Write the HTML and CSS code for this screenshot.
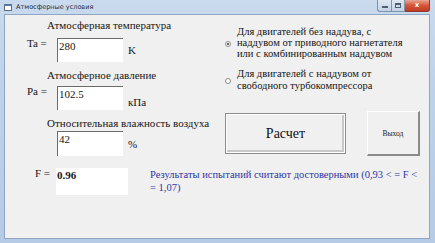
FILE: index.html
```html
<!DOCTYPE html>
<html lang="ru">

<head>
    <meta charset="UTF-8">
    <title>Атмосферные условия</title>
    <link rel="stylesheet" href="styles.css">
</head>

<body>
    <div class="window">
        <div class="titlebar">
            <svg class="app-icon" width="9" height="9" viewBox="0 0 9 9">
                <rect x="0.5" y="1.5" width="7" height="6" fill="#fff" stroke="#5a6b80" />
                <rect x="0.5" y="1.5" width="7" height="1.5" fill="#5a7ca8" />
            </svg>
            <span class="title">Атмосферные условия</span>
            <div class="controls">
                <div class="ctl ctl-min"><span></span></div>
                <div class="ctl ctl-max"><span></span></div>
                <div class="ctl ctl-close">x</div>
            </div>
        </div>

        <div class="client">
            <div class="fields">
                <div class="field field-t">
                    <div class="caption">Атмосферная температура</div>
                    <div class="row">
                        <span class="label">Ta =</span>
                        <div class="edit">280</div>
                        <span class="unit">K</span>
                    </div>
                </div>
                <div class="field field-p">
                    <div class="caption">Атмосферное давление</div>
                    <div class="row">
                        <span class="label">Pa =</span>
                        <div class="edit">102.5</div>
                        <span class="unit unit-low">кПа</span>
                    </div>
                </div>
                <div class="field field-h">
                    <div class="caption">Относительная влажность воздуха</div>
                    <div class="row">
                        <span class="label">&nbsp;</span>
                        <div class="edit">42</div>
                        <span class="unit">%</span>
                    </div>
                </div>
            </div>

            <div class="options">
                <div class="radio radio-first">
                    <span class="dot checked"></span>
                    <span class="radio-text">Для двигателей без наддува, с<br>наддувом от приводного нагнетателя<br>или с комбинированным наддувом</span>
                </div>
                <div class="radio radio-second">
                    <span class="dot"></span>
                    <span class="radio-text">Для двигателей с наддувом от<br>свободного турбокомпрессора</span>
                </div>
                <div class="buttons">
                    <div class="btn btn-calc">Расчет</div>
                    <div class="btn btn-exit">Выход</div>
                </div>
            </div>

            <div class="result">
                <span class="label label-f">F =</span>
                <div class="result-box">0.96</div>
                <div class="verdict">Результаты испытаний считают достоверными (0,93 &lt; = F &lt;<br>= 1,07)</div>
            </div>
        </div>
    </div>
</body>

</html>
```

FILE: styles.css
```css
* {
    margin: 0;
    padding: 0;
    box-sizing: border-box;
}

body {
    width: 435px;
    height: 243px;
    overflow: hidden;
    background: #fff;
}

.window {
    width: 435px;
    height: 243px;
    display: flex;
    flex-direction: column;
    background: linear-gradient(180deg, #c9daee 0%, #bcd1ea 40%, #b5cbe6 100%);
    padding: 0 5px 4px 4px;
}

.titlebar {
    height: 14px;
    display: flex;
    align-items: center;
    font-family: "DejaVu Sans", "Liberation Sans", sans-serif;
}

.app-icon {
    margin-right: 3px;
}

.title {
    font-size: 6.5px;
    color: #1e2a3a;
}

.controls {
    margin-left: auto;
    display: flex;
    align-self: flex-start;
    height: 12px;
}

.ctl {
    width: 14px;
    height: 12px;
    border: 1px solid #7f93ad;
    border-top: none;
    background: linear-gradient(180deg, #dfe8f3, #c3d2e4);
    display: flex;
    align-items: center;
    justify-content: center;
}

.ctl-min {
    border-radius: 0 0 0 3px;
    border-right: none;
}

.ctl-min span {
    width: 6px;
    height: 2px;
    background: #4e5d70;
    margin-top: 3px;
}

.ctl-max span {
    width: 6px;
    height: 5px;
    border: 1px solid #4e5d70;
    border-top-width: 2px;
}

.ctl-close {
    width: 25px;
    border-left: none;
    border-color: #8f3a2e;
    border-radius: 0 0 3px 0;
    background: linear-gradient(180deg, #e8a491 0%, #d5553b 50%, #c23b22 100%);
    color: #fff;
    font-size: 7px;
    font-weight: bold;
    line-height: 1;
}

.client {
    flex: 1;
    background: #f0f0f0;
    border: 1px solid #8fa6c2;
    display: grid;
    grid-template-columns: 219px 1fr;
    grid-template-rows: auto 1fr;
    font-family: "Liberation Serif", "Times New Roman", serif;
    font-size: 11px;
    color: #161616;
}

/* left column */

.fields {
    padding: 4px 0 0 22px;
}

.caption {
    line-height: 12px;
    padding-left: 20px;
}

.field-p,
.field-h {
    margin-top: 7px;
}

.row {
    display: flex;
    margin-top: 7px;
}

.field-p .row {
    margin-top: 5px;
}

.field-h .row {
    margin-top: 2px;
}

.label {
    width: 30px;
    line-height: 12px;
    margin-top: -1px;
}

.edit {
    width: 66px;
    height: 24px;
    background: #fff;
    border-left: 1px solid #6b6b6b;
    border-top: 1px solid #6b6b6b;
    padding: 1px 0 0 1px;
    line-height: 12px;
}

.field-h .edit {
    height: 25px;
}

.unit {
    align-self: center;
    margin-left: 5px;
    line-height: 12px;
}

.unit-low {
    margin-top: 8px;
}

/* right column */

.options {
    padding: 11px 0 0 1px;
}

.radio {
    display: flex;
    align-items: center;
}

.radio-text {
    line-height: 11px;
    font-size: 10.5px;
    margin-left: 6px;
}

.radio-second {
    margin-top: 9px;
}

.radio-second .radio-text {
    line-height: 12px;
}

.dot {
    width: 6px;
    height: 6px;
    border-radius: 50%;
    border: 1px solid #8a8a8a;
    background: #fff;
    position: relative;
    top: 1px;
}

.dot.checked::after {
    content: '';
    position: absolute;
    left: 1px;
    top: 1px;
    width: 2px;
    height: 2px;
    border-radius: 50%;
    background: #2b2b2b;
}

.buttons {
    display: flex;
    align-items: center;
    margin-top: 19px;
}

.btn {
    display: flex;
    align-items: center;
    justify-content: center;
}

.btn-calc {
    width: 121px;
    height: 41px;
    border: 1px solid #8c8c8c;
    box-shadow: inset 0 0 0 1px #fff, inset -1px -1px 0 2px #c8c8c8;
    font-size: 14px;
    color: #111;
}

.btn-exit {
    width: 53px;
    height: 45px;
    margin-left: 21px;
    border-right: 2px solid #8a8a8a;
    border-bottom: 2px solid #8a8a8a;
    border-top: 1px solid #fff;
    border-left: 1px solid #fff;
    font-size: 7.5px;
    color: #222;
}

/* result row */

.result {
    grid-column: 1 / 3;
    display: flex;
    align-items: flex-start;
    padding: 12px 0 0 30px;
}

.label-f {
    width: 21px;
    margin-top: -1px;
}

.result-box {
    width: 72px;
    height: 27px;
    background: #fff;
    font-weight: bold;
    line-height: 12px;
    padding: 1px 0 0 1px;
}

.verdict {
    margin-left: 22px;
    color: #2d36a6;
    font-size: 10.5px;
    line-height: 13px;
}
```
